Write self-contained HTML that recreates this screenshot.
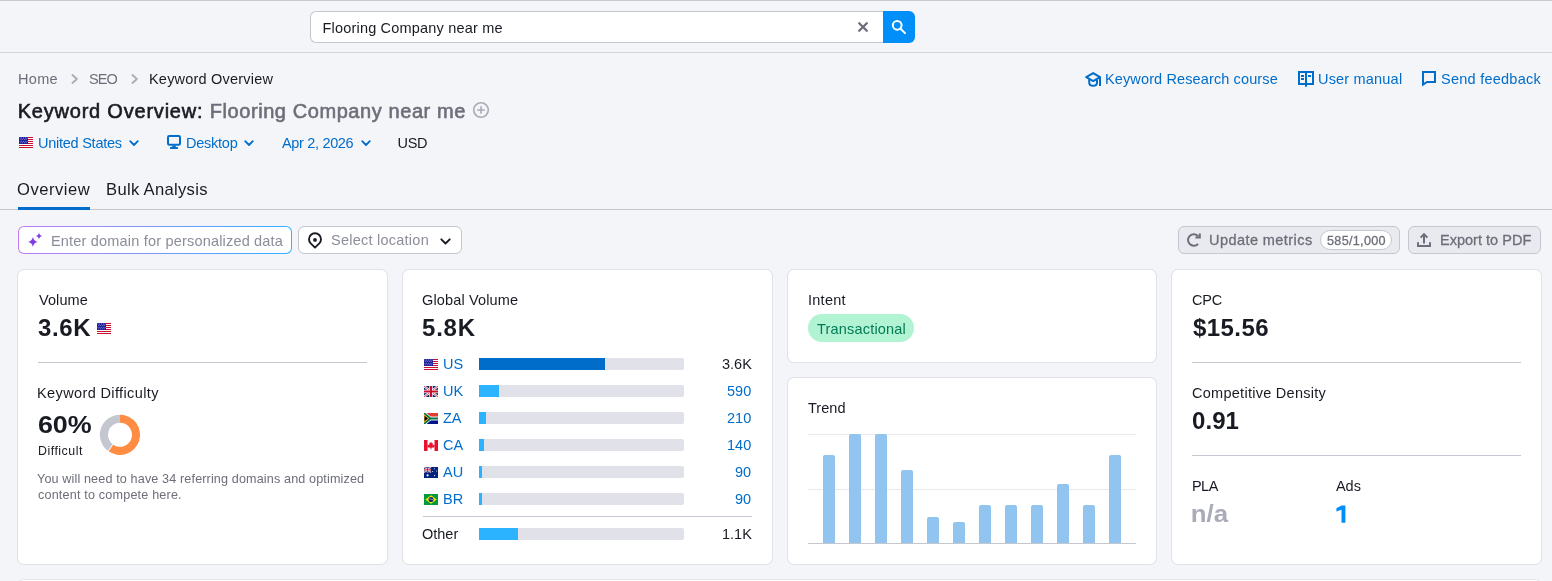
<!DOCTYPE html>
<html><head><meta charset="utf-8"><style>
html,body{margin:0;padding:0;}
body{width:1552px;height:581px;overflow:hidden;background:#f4f5f9;position:relative;font-family:"Liberation Sans",sans-serif;}
.a{position:absolute;}
.t{position:absolute;line-height:1;white-space:nowrap;}
.g{will-change:transform;}
svg.a{overflow:visible;}
</style></head><body>
<div class="a" style="left:0px;top:0px;width:1552px;height:1px;background:#c9cac9"></div>
<div class="a" style="left:0px;top:52px;width:1552px;height:1px;background:#d3d5dc"></div>
<div class="a" style="left:310px;top:11px;width:573px;height:32px;box-sizing:border-box;border:1px solid #c4c7cf;border-right:none;border-radius:6px 0 0 6px;background:#fff"></div>
<div class="a" style="left:883px;top:11px;width:32px;height:32px;background:#008ff8;border-radius:0 6px 6px 0"></div>
<svg class="a" style="left:857px;top:21px" width="12" height="12" viewBox="0 0 12 12"><path d="M2.2 2.2L9.8 9.8M9.8 2.2L2.2 9.8" stroke="#6c6e79" stroke-width="2.3" stroke-linecap="round"/></svg>
<svg class="a" style="left:890px;top:18px" width="20" height="18" viewBox="0 0 20 18"><circle cx="7.2" cy="7.3" r="4.4" fill="none" stroke="#fff" stroke-width="2"/><path d="M10.4 10.5L15 15.1" stroke="#fff" stroke-width="2" stroke-linecap="round"/></svg>
<svg class="a" style="left:70.5px;top:74px" width="8" height="10" viewBox="0 0 8 10"><path d="M1.4 1L5.9 5L1.4 9" fill="none" stroke="#a9abb6" stroke-width="1.8" stroke-linecap="round" stroke-linejoin="round"/></svg>
<svg class="a" style="left:130.5px;top:74px" width="8" height="10" viewBox="0 0 8 10"><path d="M1.4 1L5.9 5L1.4 9" fill="none" stroke="#a9abb6" stroke-width="1.8" stroke-linecap="round" stroke-linejoin="round"/></svg>
<svg class="a" style="left:472px;top:101px" width="18" height="18" viewBox="0 0 18 18"><circle cx="9" cy="9" r="7.3" fill="none" stroke="#a9abb6" stroke-width="1.6"/><path d="M9 5.2V12.8M5.2 9H12.8" stroke="#a9abb6" stroke-width="1.6"/></svg>
<svg class="a" style="left:129px;top:139.5px" width="10" height="7" viewBox="0 0 10 7"><path d="M1.2 1.2L5 5L8.8 1.2" fill="none" stroke="#006dca" stroke-width="1.8" stroke-linecap="round" stroke-linejoin="round"/></svg>
<svg class="a" style="left:244px;top:139.5px" width="10" height="7" viewBox="0 0 10 7"><path d="M1.2 1.2L5 5L8.8 1.2" fill="none" stroke="#006dca" stroke-width="1.8" stroke-linecap="round" stroke-linejoin="round"/></svg>
<svg class="a" style="left:361px;top:139.5px" width="10" height="7" viewBox="0 0 10 7"><path d="M1.2 1.2L5 5L8.8 1.2" fill="none" stroke="#006dca" stroke-width="1.8" stroke-linecap="round" stroke-linejoin="round"/></svg>
<div class="a" style="left:0px;top:209px;width:1552px;height:1px;background:#c4c7cf"></div>
<div class="a" style="left:18px;top:206.5px;width:72px;height:3px;background:#006dca"></div>
<div class="a" style="left:18px;top:226px;width:274px;height:28px;box-sizing:border-box;border:1px solid transparent;border-radius:6px;background:linear-gradient(#fff,#fff) padding-box,linear-gradient(90deg,#c27cf7,#2bb3ff) border-box"></div>
<div class="a" style="left:298px;top:226px;width:164px;height:28px;box-sizing:border-box;border:1px solid #c4c7cf;border-radius:6px;background:#fff"></div>
<svg class="a" style="left:439.5px;top:237.5px" width="11" height="7" viewBox="0 0 11 7"><path d="M1.3 1.3L5.5 5.5L9.7 1.3" fill="none" stroke="#191b23" stroke-width="1.9" stroke-linecap="round" stroke-linejoin="round"/></svg>
<div class="a" style="left:1178px;top:226px;width:222px;height:28px;box-sizing:border-box;border:1px solid #c4c7cf;border-radius:6px;background:#e9eaef"></div>
<div class="a" style="left:1320.3px;top:230.2px;width:71.7px;height:19.6px;box-sizing:border-box;border:1px solid #c4c7cf;border-radius:10px;background:#fff"></div>
<div class="a" style="left:1408px;top:226px;width:133px;height:28px;box-sizing:border-box;border:1px solid #c4c7cf;border-radius:6px;background:#e9eaef"></div>
<div class="a" style="left:18px;top:270px;width:369px;height:294px;box-sizing:border-box;background:#fff;border-radius:6px;box-shadow:0 0 0 1px #e1e2e7"></div>
<div class="a" style="left:403px;top:270px;width:369px;height:294px;box-sizing:border-box;background:#fff;border-radius:6px;box-shadow:0 0 0 1px #e1e2e7"></div>
<div class="a" style="left:788px;top:270px;width:368px;height:92px;box-sizing:border-box;background:#fff;border-radius:6px;box-shadow:0 0 0 1px #e1e2e7"></div>
<div class="a" style="left:788px;top:378px;width:368px;height:186px;box-sizing:border-box;background:#fff;border-radius:6px;box-shadow:0 0 0 1px #e1e2e7"></div>
<div class="a" style="left:1172px;top:270px;width:369px;height:294px;box-sizing:border-box;background:#fff;border-radius:6px;box-shadow:0 0 0 1px #e1e2e7"></div>
<div class="a" style="left:18px;top:580px;width:1523px;height:20px;box-sizing:border-box;background:#fff;border-radius:6px;box-shadow:0 0 0 1px #e6e7ec"></div>
<div class="a" style="left:38px;top:362px;width:328.7px;height:1px;background:#c4c7cf"></div>
<div class="t g" style="left:443.4px;top:357.00px;font-size:14.5px;color:#006dca;font-weight:400;">US</div>
<div class="a" style="left:479px;top:358px;width:205px;height:12px;background:#e0e1e9;border-radius:0 2px 2px 0"></div>
<div class="a" style="left:479px;top:358px;width:126px;height:12px;background:#006dca"></div>
<div class="t g" style="right:800.5px;top:357.00px;font-size:14.5px;color:#191b23;font-weight:400;">3.6K</div>
<div class="t g" style="left:443.4px;top:384.00px;font-size:14.5px;color:#006dca;font-weight:400;">UK</div>
<div class="a" style="left:479px;top:385px;width:205px;height:12px;background:#e0e1e9;border-radius:0 2px 2px 0"></div>
<div class="a" style="left:479px;top:385px;width:20px;height:12px;background:#2bb3ff"></div>
<div class="t g" style="right:800.5px;top:384.00px;font-size:14.5px;color:#006dca;font-weight:400;">590</div>
<div class="t g" style="left:443.4px;top:411.00px;font-size:14.5px;color:#006dca;font-weight:400;">ZA</div>
<div class="a" style="left:479px;top:412px;width:205px;height:12px;background:#e0e1e9;border-radius:0 2px 2px 0"></div>
<div class="a" style="left:479px;top:412px;width:7px;height:12px;background:#2bb3ff"></div>
<div class="t g" style="right:800.5px;top:411.00px;font-size:14.5px;color:#006dca;font-weight:400;">210</div>
<div class="t g" style="left:443.4px;top:438.00px;font-size:14.5px;color:#006dca;font-weight:400;">CA</div>
<div class="a" style="left:479px;top:439px;width:205px;height:12px;background:#e0e1e9;border-radius:0 2px 2px 0"></div>
<div class="a" style="left:479px;top:439px;width:5px;height:12px;background:#2bb3ff"></div>
<div class="t g" style="right:800.5px;top:438.00px;font-size:14.5px;color:#006dca;font-weight:400;">140</div>
<div class="t g" style="left:443.4px;top:465.00px;font-size:14.5px;color:#006dca;font-weight:400;">AU</div>
<div class="a" style="left:479px;top:466px;width:205px;height:12px;background:#e0e1e9;border-radius:0 2px 2px 0"></div>
<div class="a" style="left:479px;top:466px;width:3px;height:12px;background:#2bb3ff"></div>
<div class="t g" style="right:800.5px;top:465.00px;font-size:14.5px;color:#006dca;font-weight:400;">90</div>
<div class="t g" style="left:443.4px;top:492.00px;font-size:14.5px;color:#006dca;font-weight:400;">BR</div>
<div class="a" style="left:479px;top:493px;width:205px;height:12px;background:#e0e1e9;border-radius:0 2px 2px 0"></div>
<div class="a" style="left:479px;top:493px;width:3px;height:12px;background:#2bb3ff"></div>
<div class="t g" style="right:800.5px;top:492.00px;font-size:14.5px;color:#006dca;font-weight:400;">90</div>
<div class="a" style="left:423px;top:516px;width:328.5px;height:1px;background:#c4c7cf"></div>
<div class="a" style="left:479px;top:528px;width:205px;height:12px;background:#e0e1e9;border-radius:0 2px 2px 0"></div>
<div class="a" style="left:479px;top:528px;width:39px;height:12px;background:#2bb3ff"></div>
<div class="t g" style="right:800.5px;top:527.00px;font-size:14.5px;color:#191b23;font-weight:400;">1.1K</div>
<div class="t g" style="left:422.3px;top:527.00px;font-size:14.5px;color:#191b23;font-weight:400;">Other</div>
<div class="a" style="left:807.5px;top:314px;width:106.5px;height:28px;background:#b1f3d3;border-radius:14px"></div>
<div class="a" style="left:808px;top:434px;width:328px;height:1px;background:#e9e9ee"></div>
<div class="a" style="left:808px;top:488.5px;width:328px;height:1px;background:#e9e9ee"></div>
<div class="a" style="left:808px;top:543px;width:328px;height:1px;background:#c4c7cf"></div>
<div class="a" style="left:823px;top:455px;width:12px;height:88px;background:#91c4ee;border-radius:2px 2px 0 0"></div>
<div class="a" style="left:849px;top:434px;width:12px;height:109px;background:#91c4ee;border-radius:2px 2px 0 0"></div>
<div class="a" style="left:875px;top:434px;width:12px;height:109px;background:#91c4ee;border-radius:2px 2px 0 0"></div>
<div class="a" style="left:901px;top:470px;width:12px;height:73px;background:#91c4ee;border-radius:2px 2px 0 0"></div>
<div class="a" style="left:927px;top:517px;width:12px;height:26px;background:#91c4ee;border-radius:2px 2px 0 0"></div>
<div class="a" style="left:953px;top:522px;width:12px;height:21px;background:#91c4ee;border-radius:2px 2px 0 0"></div>
<div class="a" style="left:979px;top:505px;width:12px;height:38px;background:#91c4ee;border-radius:2px 2px 0 0"></div>
<div class="a" style="left:1005px;top:505px;width:12px;height:38px;background:#91c4ee;border-radius:2px 2px 0 0"></div>
<div class="a" style="left:1031px;top:505px;width:12px;height:38px;background:#91c4ee;border-radius:2px 2px 0 0"></div>
<div class="a" style="left:1057px;top:484px;width:12px;height:59px;background:#91c4ee;border-radius:2px 2px 0 0"></div>
<div class="a" style="left:1083px;top:505px;width:12px;height:38px;background:#91c4ee;border-radius:2px 2px 0 0"></div>
<div class="a" style="left:1109px;top:455px;width:12px;height:88px;background:#91c4ee;border-radius:2px 2px 0 0"></div>
<div class="a" style="left:1192px;top:362px;width:328.7px;height:1px;background:#c4c7cf"></div>
<div class="a" style="left:1192px;top:455px;width:328.7px;height:1px;background:#c4c7cf"></div>
<svg class="a" style="overflow:hidden;left:19px;top:137px" width="14" height="11" viewBox="0 0 14 11"><rect width="14" height="11" fill="#fff"/><rect y="0" width="14" height="1" fill="#c8102e"/><rect y="2" width="14" height="1" fill="#c8102e"/><rect y="4" width="14" height="1" fill="#c8102e"/><rect y="6" width="14" height="1" fill="#c8102e"/><rect y="8" width="14" height="1" fill="#c8102e"/><rect y="10" width="14" height="1" fill="#c8102e"/><rect width="9" height="7" fill="#1c1c9c"/><circle cx="1.00" cy="1.00" r="0.42" fill="#fff"/><circle cx="2.75" cy="1.00" r="0.42" fill="#fff"/><circle cx="4.50" cy="1.00" r="0.42" fill="#fff"/><circle cx="6.25" cy="1.00" r="0.42" fill="#fff"/><circle cx="8.00" cy="1.00" r="0.42" fill="#fff"/><circle cx="1.88" cy="2.60" r="0.42" fill="#fff"/><circle cx="3.62" cy="2.60" r="0.42" fill="#fff"/><circle cx="5.38" cy="2.60" r="0.42" fill="#fff"/><circle cx="7.12" cy="2.60" r="0.42" fill="#fff"/><circle cx="1.00" cy="4.20" r="0.42" fill="#fff"/><circle cx="2.75" cy="4.20" r="0.42" fill="#fff"/><circle cx="4.50" cy="4.20" r="0.42" fill="#fff"/><circle cx="6.25" cy="4.20" r="0.42" fill="#fff"/><circle cx="8.00" cy="4.20" r="0.42" fill="#fff"/><circle cx="1.88" cy="5.80" r="0.42" fill="#fff"/><circle cx="3.62" cy="5.80" r="0.42" fill="#fff"/><circle cx="5.38" cy="5.80" r="0.42" fill="#fff"/><circle cx="7.12" cy="5.80" r="0.42" fill="#fff"/></svg>
<svg class="a" style="overflow:hidden;left:97px;top:323px" width="14" height="11" viewBox="0 0 14 11"><rect width="14" height="11" fill="#fff"/><rect y="0" width="14" height="1" fill="#c8102e"/><rect y="2" width="14" height="1" fill="#c8102e"/><rect y="4" width="14" height="1" fill="#c8102e"/><rect y="6" width="14" height="1" fill="#c8102e"/><rect y="8" width="14" height="1" fill="#c8102e"/><rect y="10" width="14" height="1" fill="#c8102e"/><rect width="9" height="7" fill="#1c1c9c"/><circle cx="1.00" cy="1.00" r="0.42" fill="#fff"/><circle cx="2.75" cy="1.00" r="0.42" fill="#fff"/><circle cx="4.50" cy="1.00" r="0.42" fill="#fff"/><circle cx="6.25" cy="1.00" r="0.42" fill="#fff"/><circle cx="8.00" cy="1.00" r="0.42" fill="#fff"/><circle cx="1.88" cy="2.60" r="0.42" fill="#fff"/><circle cx="3.62" cy="2.60" r="0.42" fill="#fff"/><circle cx="5.38" cy="2.60" r="0.42" fill="#fff"/><circle cx="7.12" cy="2.60" r="0.42" fill="#fff"/><circle cx="1.00" cy="4.20" r="0.42" fill="#fff"/><circle cx="2.75" cy="4.20" r="0.42" fill="#fff"/><circle cx="4.50" cy="4.20" r="0.42" fill="#fff"/><circle cx="6.25" cy="4.20" r="0.42" fill="#fff"/><circle cx="8.00" cy="4.20" r="0.42" fill="#fff"/><circle cx="1.88" cy="5.80" r="0.42" fill="#fff"/><circle cx="3.62" cy="5.80" r="0.42" fill="#fff"/><circle cx="5.38" cy="5.80" r="0.42" fill="#fff"/><circle cx="7.12" cy="5.80" r="0.42" fill="#fff"/></svg>
<svg class="a" style="overflow:hidden;left:424px;top:359px" width="14" height="11" viewBox="0 0 14 11"><rect width="14" height="11" fill="#fff"/><rect y="0" width="14" height="1" fill="#c8102e"/><rect y="2" width="14" height="1" fill="#c8102e"/><rect y="4" width="14" height="1" fill="#c8102e"/><rect y="6" width="14" height="1" fill="#c8102e"/><rect y="8" width="14" height="1" fill="#c8102e"/><rect y="10" width="14" height="1" fill="#c8102e"/><rect width="9" height="7" fill="#1c1c9c"/><circle cx="1.00" cy="1.00" r="0.42" fill="#fff"/><circle cx="2.75" cy="1.00" r="0.42" fill="#fff"/><circle cx="4.50" cy="1.00" r="0.42" fill="#fff"/><circle cx="6.25" cy="1.00" r="0.42" fill="#fff"/><circle cx="8.00" cy="1.00" r="0.42" fill="#fff"/><circle cx="1.88" cy="2.60" r="0.42" fill="#fff"/><circle cx="3.62" cy="2.60" r="0.42" fill="#fff"/><circle cx="5.38" cy="2.60" r="0.42" fill="#fff"/><circle cx="7.12" cy="2.60" r="0.42" fill="#fff"/><circle cx="1.00" cy="4.20" r="0.42" fill="#fff"/><circle cx="2.75" cy="4.20" r="0.42" fill="#fff"/><circle cx="4.50" cy="4.20" r="0.42" fill="#fff"/><circle cx="6.25" cy="4.20" r="0.42" fill="#fff"/><circle cx="8.00" cy="4.20" r="0.42" fill="#fff"/><circle cx="1.88" cy="5.80" r="0.42" fill="#fff"/><circle cx="3.62" cy="5.80" r="0.42" fill="#fff"/><circle cx="5.38" cy="5.80" r="0.42" fill="#fff"/><circle cx="7.12" cy="5.80" r="0.42" fill="#fff"/></svg>
<svg class="a" style="overflow:hidden;left:424px;top:386px" width="14" height="11" viewBox="0 0 14 11"><rect width="14" height="11" fill="#012169"/><path d="M0 0L14 11M14 0L0 11" stroke="#fff" stroke-width="2.2"/><path d="M0 0L14 11M14 0L0 11" stroke="#c8102e" stroke-width="0.8"/><path d="M7 0V11M0 5.5H14" stroke="#fff" stroke-width="3.4"/><path d="M7 0V11M0 5.5H14" stroke="#c8102e" stroke-width="2"/></svg>
<svg class="a" style="overflow:hidden;left:424px;top:413px" width="14" height="11" viewBox="0 0 14 11"><rect width="14" height="11" fill="#fff"/><rect width="14" height="3.6" fill="#e03c31"/><rect y="7.4" width="14" height="3.6" fill="#001489"/><path d="M0 0L6.5 5.5L0 11" fill="none" stroke="#fff" stroke-width="3.2"/><path d="M6 5.5H14" stroke="#fff" stroke-width="3.2"/><path d="M0 0.3L6.5 5.5L0 10.7M6.5 5.5H14" fill="none" stroke="#007749" stroke-width="2"/><path d="M0 1.8L4.6 5.5L0 9.2Z" fill="#000" stroke="#ffb81c" stroke-width="1"/></svg>
<svg class="a" style="overflow:hidden;left:424px;top:440px" width="14" height="11" viewBox="0 0 14 11"><rect width="14" height="11" fill="#fff"/><rect width="3.5" height="11" fill="#e8112d"/><rect x="10.5" width="3.5" height="11" fill="#e8112d"/><path d="M7 1.6L8 3.4L9 3L8.6 5.4L10 4.4L10.4 5.4L11 5.2L10.2 6.8L10.8 7.2L7.4 7.8V9.6H6.6V7.8L3.2 7.2L3.8 6.8L3 5.2L3.6 5.4L4 4.4L5.4 5.4L5 3L6 3.4Z" fill="#e8112d"/></svg>
<svg class="a" style="overflow:hidden;left:424px;top:467px" width="14" height="11" viewBox="0 0 14 11"><rect width="14" height="11" fill="#00247d"/><path d="M0 0L7 5.5M7 0L0 5.5" stroke="#fff" stroke-width="1.2"/><path d="M0 0L7 5.5M7 0L0 5.5" stroke="#cf142b" stroke-width="0.5"/><path d="M3.5 0V5.5M0 2.75H7" stroke="#fff" stroke-width="1.6"/><path d="M3.5 0V5.5M0 2.75H7" stroke="#cf142b" stroke-width="0.9"/><circle cx="3.6" cy="8.3" r="1.1" fill="#fff"/><circle cx="10.5" cy="1.8" r="0.5" fill="#fff"/><circle cx="8.7" cy="4.5" r="0.5" fill="#fff"/><circle cx="12.5" cy="3.9" r="0.5" fill="#fff"/><circle cx="10.6" cy="8.6" r="0.6" fill="#fff"/></svg>
<svg class="a" style="overflow:hidden;left:424px;top:494px" width="14" height="11" viewBox="0 0 14 11"><rect width="14" height="11" fill="#009c3b"/><path d="M7 1.3L12.7 5.5L7 9.7L1.3 5.5Z" fill="#ffdf00"/><circle cx="7" cy="5.5" r="2.5" fill="#002776"/><path d="M4.6 5.1Q7 4.4 9.4 6.1" stroke="#fff" stroke-width="0.5" fill="none"/></svg>
<svg class="a" style="left:166px;top:134px" width="16" height="16" viewBox="0 0 16 16"><rect x="2" y="2" width="12" height="8.8" rx="1.2" fill="none" stroke="#006dca" stroke-width="2"/><rect x="6.2" y="11.6" width="3.6" height="1.4" fill="#006dca"/><rect x="4" y="13" width="8" height="2" rx="0.6" fill="#006dca"/></svg>
<svg class="a" style="left:1085px;top:71px" width="16" height="16" viewBox="0 0 16 16"><path d="M8.2 2.1L15 6.2L8.2 10.1L1.2 6.2Z" fill="none" stroke="#006dca" stroke-width="2" stroke-linejoin="round"/><path d="M4.2 8.2V11.4C4.2 13.5 6 14.8 8.2 14.8C10.4 14.8 12 13.5 12 11.4V8.4" fill="none" stroke="#006dca" stroke-width="2"/><path d="M15 6.2V14.9" stroke="#006dca" stroke-width="2"/></svg>
<svg class="a" style="left:1297px;top:70px" width="18" height="18" viewBox="0 0 18 18"><rect x="2" y="2" width="14" height="12" fill="none" stroke="#006dca" stroke-width="2"/><path d="M9 2V16.8" stroke="#006dca" stroke-width="2"/><rect x="4" y="5" width="3" height="2" fill="#006dca"/><rect x="4" y="8" width="3" height="2" fill="#006dca"/><rect x="11" y="5" width="3" height="2" fill="#006dca"/></svg>
<svg class="a" style="left:1421px;top:70px" width="16" height="17" viewBox="0 0 16 17"><path d="M2 14.6V2H14V12H6Z" fill="none" stroke="#006dca" stroke-width="2" stroke-linejoin="miter"/></svg>
<svg class="a" style="left:1335.5px;top:505px" width="10" height="18" viewBox="0 0 10 18"><path d="M5.4 0.5H9.4V17.8H5.5V4.7L0.4 6.5V3.2Z" fill="#008ff8"/></svg>
<svg class="a" style="left:24px;top:228px" width="24" height="24" viewBox="0 0 24 24"><path d="M8.9 9.1Q9.684000000000001 13.216 13.8 14Q9.684000000000001 14.784 8.9 18.9Q8.116 14.784 4.0 14Q8.116 13.216 8.9 9.1Z" fill="#7b3fe4"/><path d="M15 4.9Q15.54 7.36 18 7.9Q15.54 8.440000000000001 15 10.9Q14.46 8.440000000000001 12 7.9Q14.46 7.36 15 4.9Z" fill="#7b3fe4"/></svg>
<svg class="a" style="left:308px;top:231.6px" width="14" height="18" viewBox="0 0 14 18"><path d="M7 15.6L2.7 11.4A6 6 0 1 1 11.3 11.4Z" fill="none" stroke="#191b23" stroke-width="1.9" stroke-linejoin="round"/><circle cx="7" cy="7.9" r="1.9" fill="#191b23"/></svg>
<svg class="a" style="left:1186px;top:232px" width="16" height="16" viewBox="0 0 16 16"><path d="M12.1 11.9A5.8 5.8 0 1 1 12.3 4.3" fill="none" stroke="#6c6e79" stroke-width="2"/><path d="M13.8 1.4V5.5H9.4" fill="none" stroke="#6c6e79" stroke-width="2"/></svg>
<svg class="a" style="left:1416px;top:232px" width="16" height="16" viewBox="0 0 16 16"><path d="M8 11.4V2.6M4.6 5.6L8 2.2L11.4 5.6" fill="none" stroke="#6c6e79" stroke-width="2" stroke-linejoin="miter"/><path d="M2 10.2V14H14V10.2" fill="none" stroke="#6c6e79" stroke-width="2"/></svg>
<svg class="a" style="left:0px;top:0px" width="1552" height="581" viewBox="0 0 1552 581"><path d="M120.000 414.700A20.1 20.1 0 1 1 108.186 451.061L112.947 444.508A12 12 0 1 0 120.000 422.800Z" fill="#ff8c43"/><path d="M108.186 451.061A20.1 20.1 0 0 1 119.998 414.700L119.999 422.800A12 12 0 0 0 112.947 444.508Z" fill="#c4c7cf"/><path d="M113.534 443.699L107.598 451.870" stroke="#fff" stroke-width="1"/></svg>
<div class="t" style="left:322.50px;top:21px;font-size:14.5px;color:#191b23;font-weight:400;letter-spacing:0.187px">Flooring Company near me</div>
<div class="t" style="left:17.90px;top:72px;font-size:14.5px;color:#6c6e79;font-weight:400;letter-spacing:0.300px;will-change:transform">Home</div>
<div class="t" style="left:88.90px;top:72px;font-size:14.5px;color:#6c6e79;font-weight:400;letter-spacing:-0.950px;will-change:transform">SEO</div>
<div class="t" style="left:149.00px;top:72px;font-size:14.5px;color:#191b23;font-weight:400;letter-spacing:0.200px;will-change:transform">Keyword Overview</div>
<div class="t" style="left:1104.60px;top:72px;font-size:14.5px;color:#006dca;font-weight:400;letter-spacing:0.123px;will-change:transform">Keyword Research course</div>
<div class="t" style="left:1317.70px;top:72px;font-size:14.5px;color:#006dca;font-weight:400;letter-spacing:0.190px;will-change:transform">User manual</div>
<div class="t" style="left:1440.70px;top:72px;font-size:14.5px;color:#006dca;font-weight:400;letter-spacing:0.250px;will-change:transform">Send feedback</div>
<div class="t" style="left:17.70px;top:101px;font-size:20px;color:#191b23;font-weight:400;letter-spacing:0.788px;-webkit-text-stroke:0.6px #191b23">Keyword Overview:</div>
<div class="t" style="left:209.70px;top:101px;font-size:20px;color:#6c6e79;font-weight:400;letter-spacing:0.578px;-webkit-text-stroke:0.6px #6c6e79">Flooring Company near me</div>
<div class="t" style="left:37.50px;top:136px;font-size:14.5px;color:#006dca;font-weight:400;letter-spacing:-0.250px;will-change:transform">United States</div>
<div class="t" style="left:185.70px;top:136px;font-size:14.5px;color:#006dca;font-weight:400;letter-spacing:-0.250px;will-change:transform">Desktop</div>
<div class="t" style="left:281.80px;top:136px;font-size:14.5px;color:#006dca;font-weight:400;letter-spacing:-0.330px;will-change:transform">Apr 2, 2026</div>
<div class="t" style="left:397.60px;top:136px;font-size:14.5px;color:#191b23;font-weight:400;letter-spacing:-0.400px">USD</div>
<div class="t" style="left:17.20px;top:182px;font-size:16.6px;color:#191b23;font-weight:400;letter-spacing:0.500px;will-change:transform">Overview</div>
<div class="t" style="left:105.70px;top:182px;font-size:16.6px;color:#191b23;font-weight:400;letter-spacing:0.308px;will-change:transform">Bulk Analysis</div>
<div class="t" style="left:50.80px;top:234px;font-size:14.5px;color:#8b8e99;font-weight:400;letter-spacing:0.188px;will-change:transform">Enter domain for personalized data</div>
<div class="t" style="left:330.60px;top:233px;font-size:14.5px;color:#8b8e99;font-weight:400;letter-spacing:0.243px;will-change:transform">Select location</div>
<div class="t" style="left:1209.30px;top:233px;font-size:14.5px;color:#6c6e79;font-weight:400;letter-spacing:0.438px;-webkit-text-stroke:0.3px #6c6e79;will-change:transform">Update metrics</div>
<div class="t" style="left:1326.70px;top:235px;font-size:12.6px;color:#6c6e79;font-weight:400;letter-spacing:0.312px;-webkit-text-stroke:0.3px #6c6e79;will-change:transform">585/1,000</div>
<div class="t" style="left:1440.00px;top:233px;font-size:14.5px;color:#6c6e79;font-weight:400;letter-spacing:0.017px;-webkit-text-stroke:0.3px #6c6e79;will-change:transform">Export to PDF</div>
<div class="t" style="left:38.60px;top:293px;font-size:14.5px;color:#191b23;font-weight:400;letter-spacing:0.080px;will-change:transform">Volume</div>
<div class="t" style="left:37.90px;top:316px;font-size:24px;color:#191b23;font-weight:700;letter-spacing:0.633px;will-change:transform">3.6K</div>
<div class="t" style="left:37.20px;top:386px;font-size:14.5px;color:#191b23;font-weight:400;letter-spacing:0.382px;will-change:transform">Keyword Difficulty</div>
<div class="t" style="left:37.50px;top:413px;font-size:24px;color:#191b23;font-weight:700;transform:scaleX(1.1213);transform-origin:1px 0;will-change:transform">60%</div>
<div class="t" style="left:37.50px;top:445px;font-size:12.4px;color:#191b23;font-weight:400;letter-spacing:0.500px;will-change:transform">Difficult</div>
<div class="t" style="left:37.40px;top:473px;font-size:12.6px;color:#6c6e79;font-weight:400;letter-spacing:0.138px;will-change:transform">You will need to have 34 referring domains and optimized</div>
<div class="t" style="left:38.40px;top:489px;font-size:12.6px;color:#6c6e79;font-weight:400;letter-spacing:0.187px;will-change:transform">content to compete here.</div>
<div class="t" style="left:422.20px;top:293px;font-size:14.5px;color:#191b23;font-weight:400;letter-spacing:0.142px;will-change:transform">Global Volume</div>
<div class="t" style="left:422.20px;top:316px;font-size:24px;color:#191b23;font-weight:700;letter-spacing:0.800px;will-change:transform">5.8K</div>
<div class="t" style="left:807.50px;top:293px;font-size:14.5px;color:#191b23;font-weight:400;letter-spacing:0.260px;will-change:transform">Intent</div>
<div class="t" style="left:817.00px;top:322px;font-size:14.5px;color:#007c54;font-weight:400;letter-spacing:0.192px;will-change:transform">Transactional</div>
<div class="t" style="left:807.90px;top:401px;font-size:14.5px;color:#191b23;font-weight:400;letter-spacing:0.025px;will-change:transform">Trend</div>
<div class="t" style="left:1191.70px;top:293px;font-size:14.5px;color:#191b23;font-weight:400;letter-spacing:-0.250px;will-change:transform">CPC</div>
<div class="t" style="left:1192.50px;top:316px;font-size:24px;color:#191b23;font-weight:700;letter-spacing:0.420px;will-change:transform">$15.56</div>
<div class="t" style="left:1191.50px;top:386px;font-size:14.5px;color:#191b23;font-weight:400;letter-spacing:0.272px;will-change:transform">Competitive Density</div>
<div class="t" style="left:1192.00px;top:409px;font-size:24px;color:#191b23;font-weight:700;letter-spacing:0.067px;will-change:transform">0.91</div>
<div class="t" style="left:1192.10px;top:479px;font-size:14.5px;color:#191b23;font-weight:400;letter-spacing:-0.550px;will-change:transform">PLA</div>
<div class="t" style="left:1336.40px;top:479px;font-size:14.5px;color:#191b23;font-weight:400;letter-spacing:-0.050px;will-change:transform">Ads</div>
<div class="t" style="left:1191.00px;top:502px;font-size:24px;color:#a9abb6;font-weight:700;transform:scaleX(1.0758);transform-origin:2px 0;will-change:transform">n/a</div>
</body></html>
